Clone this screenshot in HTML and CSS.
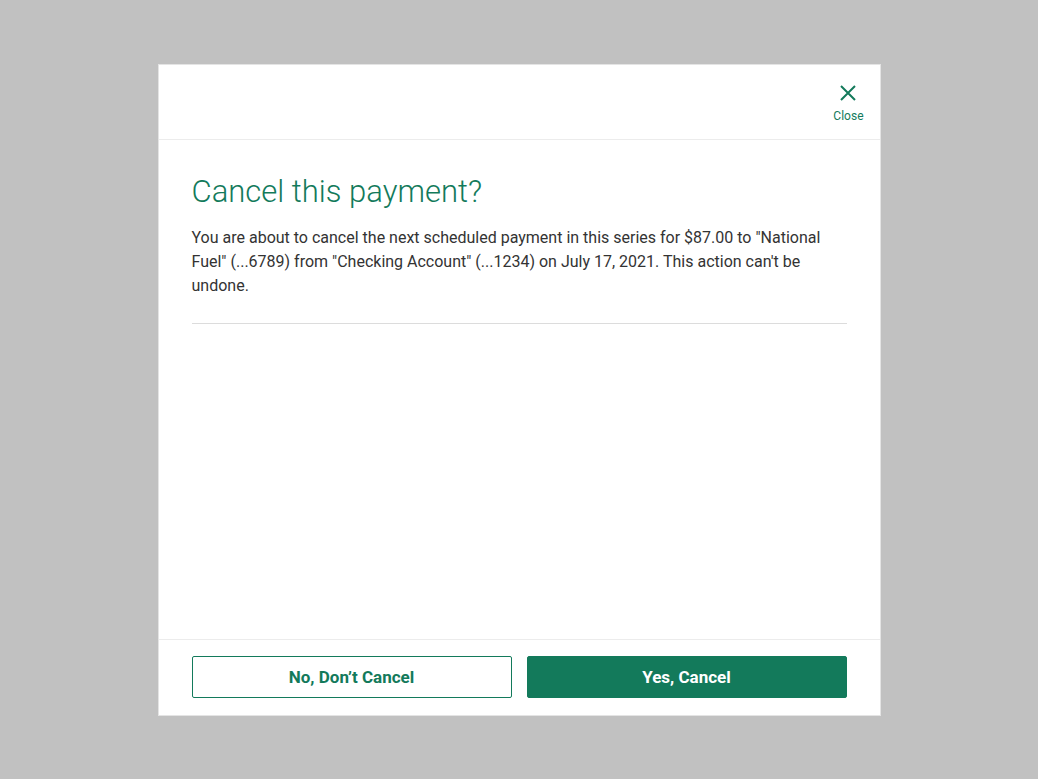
FILE: index.html
```html
<!DOCTYPE html>
<html lang="en">
<head>
    <meta charset="UTF-8">
    <meta name="viewport" content="width=device-width, initial-scale=1.0">
    <title>Cancel payment</title>
    <link rel="stylesheet" href="styles.css">
</head>
<body>
    <div class="modal">
        <div class="modal-header">
            <button class="close-btn" type="button">
                <svg width="18" height="18" viewBox="0 0 18 18" aria-hidden="true">
                    <path d="M2 2 L16 16 M16 2 L2 16" stroke="#137a5b" stroke-width="2" fill="none"/>
                </svg>
                <span>Close</span>
            </button>
        </div>

        <div class="modal-body">
            <h1>Cancel this payment?</h1>
            <p>You are about to cancel the next scheduled payment in this series for $87.00 to "National Fuel" (...6789) from "Checking Account" (...1234) on July 17, 2021. This action can't be undone.</p>
            <hr>
        </div>

        <div class="modal-footer">
            <button class="btn btn-outline" type="button">No, Don’t Cancel</button>
            <button class="btn btn-primary" type="button">Yes, Cancel</button>
        </div>
    </div>
</body>
</html>
```

FILE: styles.css
```css
html, body {
    height: 100%;
}

body {
    margin: 0;
    background-color: #c1c1c1;
    font-family: Roboto, "Liberation Sans", sans-serif;
    color: #333;
    display: flex;
    justify-content: center;
    align-items: flex-start;
}

.modal {
    margin-top: 64px;
    width: 721px;
    height: 650px;
    background-color: #fff;
    border: 1px solid #e4e4e4;
    display: flex;
    flex-direction: column;
}

.modal-header {
    height: 74px;
    border-bottom: 1px solid #ececec;
    display: flex;
    justify-content: flex-end;
    align-items: flex-start;
    padding: 0 16px 0 0;
}

.close-btn {
    margin-top: 19px;
    background: none;
    border: none;
    padding: 0;
    display: flex;
    flex-direction: column;
    align-items: center;
    cursor: pointer;
    color: #137a5b;
    font-family: inherit;
    font-size: 12px;
    gap: 7px;
}

.modal-body {
    flex: 1;
    padding: 0 33px;
}

h1 {
    margin: 32px 0 0;
    font-size: 31px;
    font-weight: 300;
    line-height: 40px;
    color: #137a5b;
}

p {
    margin: 14px 0 0;
    font-size: 16px;
    line-height: 24px;
    color: #333;
}

hr {
    margin: 25px 0 0;
    border: none;
    border-top: 1px solid #dcdcdc;
}

.modal-footer {
    border-top: 1px solid #ececec;
    padding: 16px 33px 17px;
    display: flex;
    gap: 15px;
}

.btn {
    flex: 1;
    height: 42px;
    font-family: inherit;
    font-size: 17px;
    font-weight: 700;
    border-radius: 2px;
    cursor: pointer;
}

.btn-outline {
    background-color: #fff;
    border: 1px solid #137a5b;
    color: #137a5b;
}

.btn-primary {
    background-color: #137a5b;
    border: 1px solid #137a5b;
    color: #fff;
}
```
